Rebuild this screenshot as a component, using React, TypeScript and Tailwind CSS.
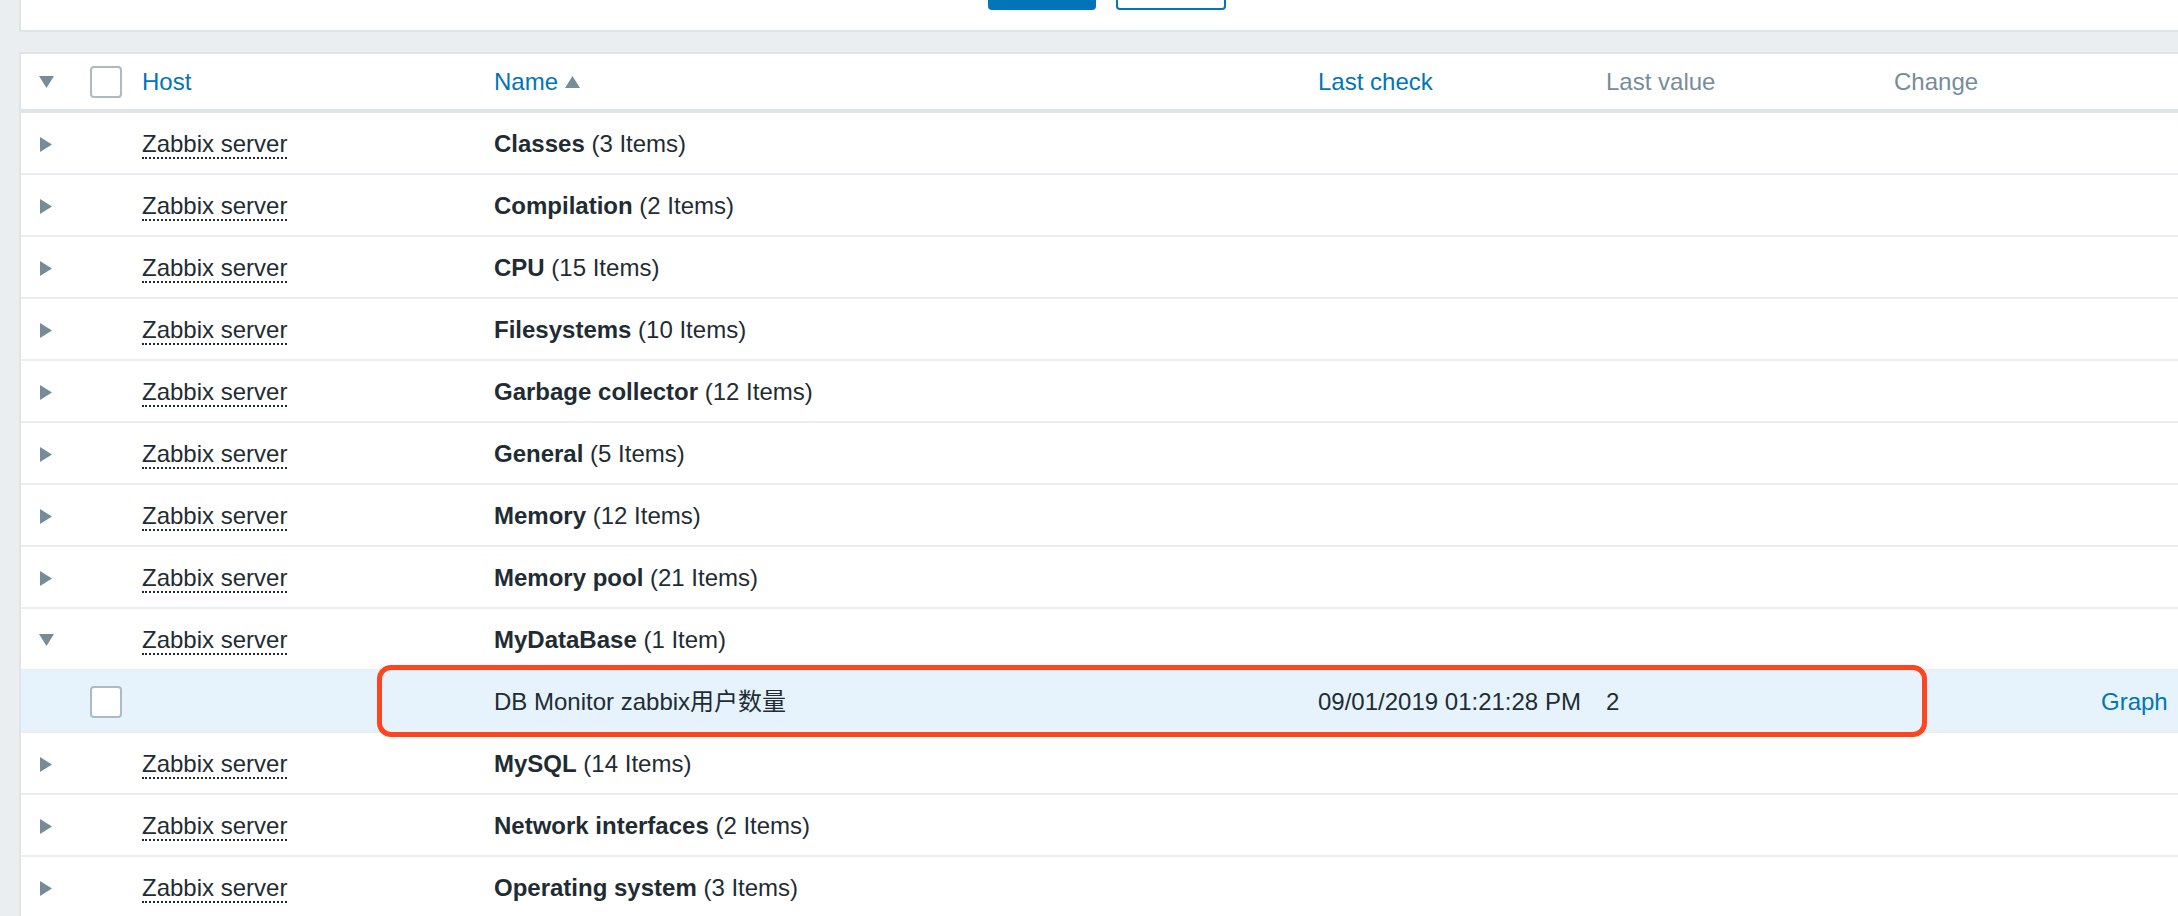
import React from "react";

function TriDown() {
  return (
    <svg width="15" height="12" viewBox="0 0 15 12">
      <polygon points="0,0 15,0 7.5,12" fill="#768d99" />
    </svg>
  );
}
function TriRight() {
  return (
    <svg width="12" height="15" viewBox="0 0 12 15">
      <polygon points="0,0 12,7.5 0,15" fill="#768d99" />
    </svg>
  );
}
function TriUp() {
  return (
    <svg width="15" height="12" viewBox="0 0 15 12">
      <polygon points="7.5,0 15,12 0,12" fill="#768d99" />
    </svg>
  );
}
function Checkbox() {
  return <div className="w-[32px] h-[32px] rounded-[4px] border-2 border-[#acbbc2] bg-white" />;
}

const groups: { name: string; count: string; expanded?: boolean }[] = [
  { name: "Classes", count: "(3 Items)" },
  { name: "Compilation", count: "(2 Items)" },
  { name: "CPU", count: "(15 Items)" },
  { name: "Filesystems", count: "(10 Items)" },
  { name: "Garbage collector", count: "(12 Items)" },
  { name: "General", count: "(5 Items)" },
  { name: "Memory", count: "(12 Items)" },
  { name: "Memory pool", count: "(21 Items)" },
  { name: "MyDataBase", count: "(1 Item)", expanded: true },
  { name: "MySQL", count: "(14 Items)" },
  { name: "Network interfaces", count: "(2 Items)" },
  { name: "Operating system", count: "(3 Items)" },
];

function GroupRow({ name, count, expanded }: { name: string; count: string; expanded?: boolean }) {
  return (
    <div className="grid grid-cols-[59px_53px_352px_823px_288px_288px_207px_1fr] items-center h-[62px] pt-[2px] border-b-2 border-[#ebeef0] bg-white">
      <div className="pl-[17px] flex">
        <div className="w-[16px] flex justify-center items-center">{expanded ? <TriDown /> : <TriRight />}</div>
      </div>
      <div />
      <div className="pl-[9px] pr-[10px] whitespace-nowrap">
        <span className="border-b-2 border-dotted border-[#1f2c33]">Zabbix server</span>
      </div>
      <div className="pl-[9px] pr-[10px] whitespace-nowrap">
        <span className="font-bold">{name}</span> {count}
      </div>
      <div />
      <div />
      <div />
      <div />
    </div>
  );
}

function ItemRow() {
  return (
    <div className="grid grid-cols-[59px_53px_352px_823px_288px_288px_207px_1fr] items-center h-[62px] pt-[2px] border-b-2 border-[#ebeef0] bg-[#e6f3fc]">
      <div />
      <div className="pl-[10px]">
        <Checkbox />
      </div>
      <div />
      <div className="pl-[9px] pr-[10px] whitespace-nowrap">DB Monitor zabbix用户数量</div>
      <div className="pl-[10px] pr-[10px] whitespace-nowrap">09/01/2019 01:21:28 PM</div>
      <div className="px-[10px] whitespace-nowrap">2</div>
      <div />
      <div className="px-[10px] whitespace-nowrap text-[#0275b8]">Graph</div>
    </div>
  );
}

export default function App() {
  return (
    <div className="relative w-[2178px] h-[916px] overflow-hidden bg-[#ebeef0] pl-[19px] font-['Liberation_Sans','Noto_Sans_CJK_SC',sans-serif] text-[24px] leading-[28px] text-[#1f2c33]">
      <div className="h-[32px] bg-white border-l-2 border-b-2 border-[#dfe4e7] overflow-hidden flex items-end pb-[20px]">
        <div className="ml-[967px] flex gap-[20px]">
          <div className="w-[108px] h-[48px] rounded-[4px] bg-[#0275b8]" />
          <div className="w-[110px] h-[48px] rounded-[4px] border-2 border-[#0275b8] bg-white" />
        </div>
      </div>
      <div className="mt-[20px] bg-white border-l-2 border-t-2 border-[#dfe4e7]">
        <div className="grid grid-cols-[59px_53px_352px_823px_288px_288px_207px_1fr] items-center h-[59px] border-b-4 border-[#dfe4e7]">
          <div className="pl-[17px] flex">
            <div className="w-[16px] flex justify-center items-center">
              <TriDown />
            </div>
          </div>
          <div className="pl-[10px]">
            <Checkbox />
          </div>
          <div className="pl-[9px] pr-[10px] text-[#0275b8]">Host</div>
          <div className="pl-[9px] pr-[10px] flex items-center gap-[7px]">
            <span className="text-[#0275b8]">Name</span>
            <TriUp />
          </div>
          <div className="px-[10px] text-[#0275b8] whitespace-nowrap">Last check</div>
          <div className="px-[10px] text-[#768d99] whitespace-nowrap">Last value</div>
          <div className="px-[10px] text-[#768d99]">Change</div>
          <div />
        </div>
        {groups.map((g) => (
          <React.Fragment key={g.name}>
            <GroupRow name={g.name} count={g.count} expanded={g.expanded} />
            {g.expanded && <ItemRow />}
          </React.Fragment>
        ))}
      </div>
      <div className="absolute left-[377px] top-[665px] w-[1550px] h-[72px] border-[5px] border-[#ff4420] rounded-[14px]" />
    </div>
  );
}
